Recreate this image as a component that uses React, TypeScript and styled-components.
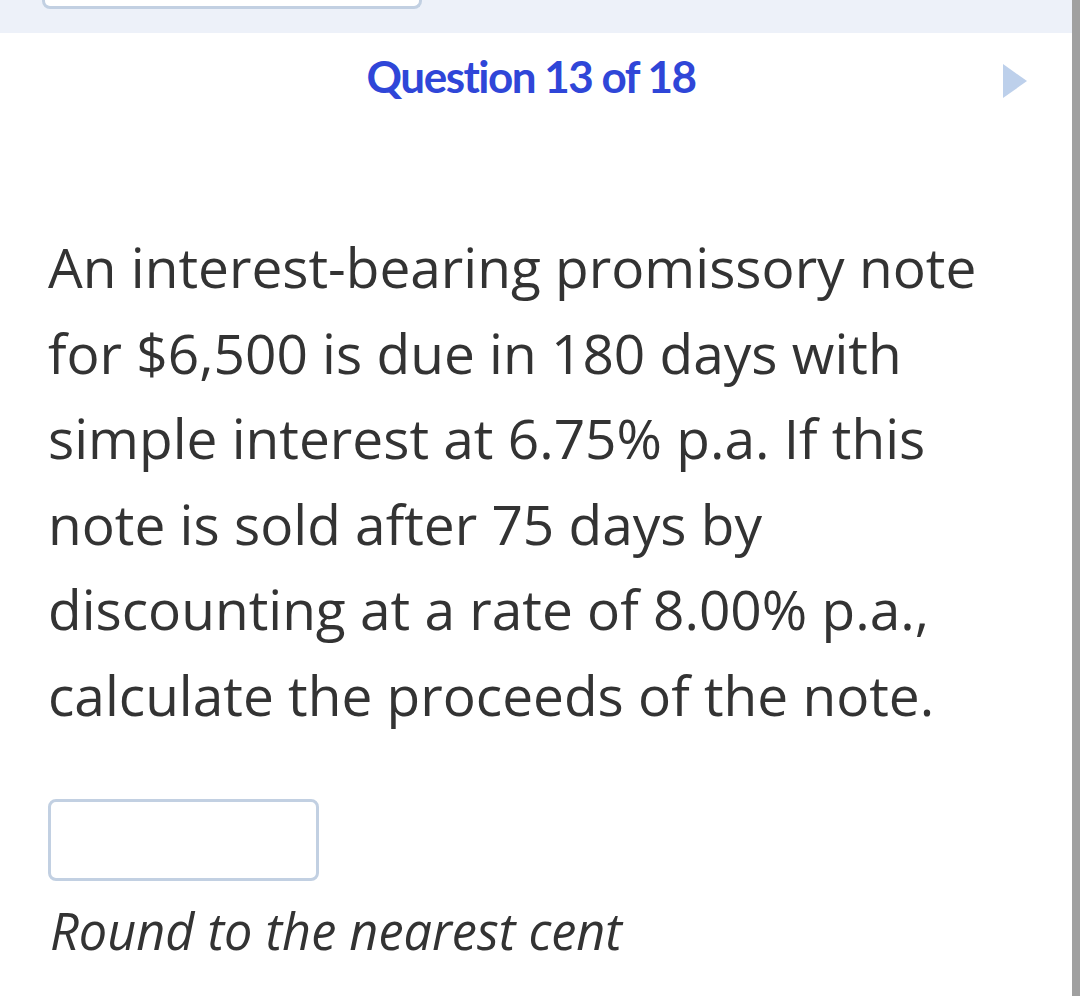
import React from "react";
import styled, { createGlobalStyle } from "styled-components";

const Global = createGlobalStyle`
  html, body { margin: 0; padding: 0; background: #ffffff; }
  body { width: 1080px; height: 996px; overflow: hidden; }
`;

const Page = styled.div`
  width: 1080px;
  height: 996px;
  display: flex;
  background: #ffffff;
`;

const Main = styled.div`
  flex: 1;
  display: flex;
  flex-direction: column;
  min-width: 0;
`;

const Scrollbar = styled.div`
  width: 8px;
  background: #a0a0a0;
`;

const TopBar = styled.div`
  height: 33px;
  background: #edf1f9;
  padding-left: 42px;
  display: flex;
  align-items: flex-start;
`;

const PrevBox = styled.div`
  width: 374px;
  height: 12px;
  margin-top: -6px;
  background: #ffffff;
  border: 3px solid #c2d0e2;
  border-top: none;
  border-radius: 0 0 8px 8px;
`;

const Header = styled.div`
  height: 90px;
  display: flex;
  align-items: center;
  justify-content: center;
  position: relative;
`;

const Title = styled.h1`
  margin: 0 10px 4px 0;
  font-family: Lato, "Open Sans", sans-serif;
  font-weight: 700;
  font-size: 44px;
  line-height: 52.8px;
  letter-spacing: -1.5px;
  color: #2f46d8;
`;

const NextArrow = styled.div`
  position: absolute;
  right: 45px;
  top: 31px;
  width: 0;
  height: 0;
  border-top: 17px solid transparent;
  border-bottom: 17px solid transparent;
  border-left: 24px solid #bdd0eb;
`;

const Body = styled.div`
  padding: 0 0 0 48px;
  display: flex;
  flex-direction: column;
  align-items: flex-start;
`;

const Prompt = styled.p`
  margin: 101px 0 0 0;
  font-family: "Open Sans", "Noto Sans", sans-serif;
  font-size: 55px;
  line-height: 85.6px;
  color: #333333;
  width: 1000px;
`;

const AnswerInput = styled.input`
  margin: 61px 0 0 0;
  width: 271px;
  height: 82px;
  box-sizing: border-box;
  border: 3.5px solid #c2d0e2;
  border-radius: 8px;
  outline: none;
  font-family: "Open Sans", sans-serif;
  font-size: 40px;
  padding: 0 12px;
`;

const Hint = styled.div`
  margin-top: 15px;
  margin-left: 2px;
  font-family: "Open Sans", "Noto Sans", sans-serif;
  font-style: italic;
  font-size: 50.4px;
  color: #333333;
`;

export default function App() {
  return (
    <Page>
      <Global />
      <Main>
        <TopBar>
          <PrevBox />
        </TopBar>
        <Header>
          <Title>Question 13 of 18</Title>
          <NextArrow />
        </Header>
        <Body>
          <Prompt>
            An interest-bearing promissory note for $6,500 is due in 180 days
            with simple interest at 6.75% p.a. If this note is sold after 75
            days by discounting at a rate of 8.00% p.a., calculate the
            proceeds of the note.
          </Prompt>
          <AnswerInput aria-label="answer" />
          <Hint>Round to the nearest cent</Hint>
        </Body>
      </Main>
      <Scrollbar />
    </Page>
  );
}
